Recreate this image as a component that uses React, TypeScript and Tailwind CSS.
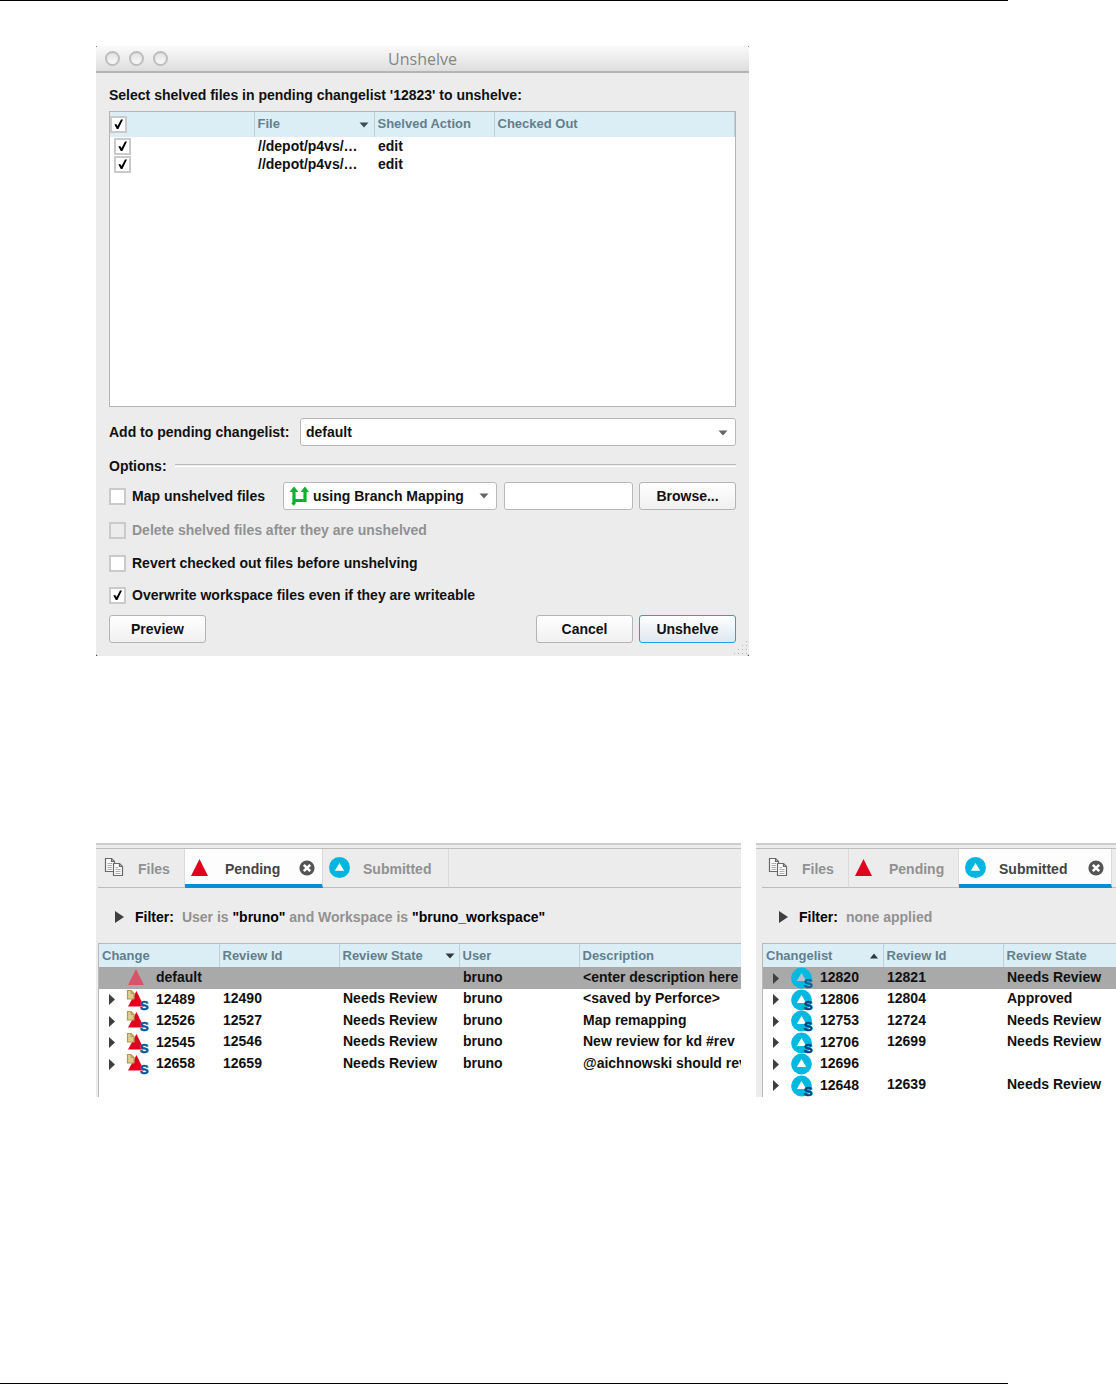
import React from "react";
import clsx from "clsx";

interface CheckProps {
  id?: string;
  label?: string;
  checked?: boolean;
  disabled?: boolean;
}

const CheckBox: React.FC<CheckProps> = ({ id, label, checked, disabled }) => (
  <span className="relative block h-[17px] w-[17px] shrink-0">
    <input
      id={id}
      type="checkbox"
      aria-label={label}
      defaultChecked={checked}
      disabled={disabled}
      className="peer block h-[17px] w-[17px] appearance-none border-2 border-[#cacaca] bg-white disabled:bg-[#ececec]"
    />
    <svg
      viewBox="0 0 17 17"
      className="pointer-events-none absolute inset-0 hidden h-[17px] w-[17px] peer-checked:block"
    >
      <path d="M4.4 8.6 L6.2 8 L7.6 10 L11 3.4 L13 3.4 L8.4 13 L6.8 13 Z" fill="#000" />
    </svg>
  </span>
);

const Arrow: React.FC<{ dir: "up" | "down"; className?: string }> = ({ dir, className }) => (
  <svg viewBox="0 0 10 6" className={clsx("h-[6px] w-[10px] shrink-0", className)}>
    <path d={dir === "down" ? "M0.5 0.5 H9.5 L5 5.5 Z" : "M1 5.5 H9 L5 0.5 Z"} fill="currentColor" />
  </svg>
);

const Expander: React.FC<{ className?: string }> = ({ className }) => (
  <svg viewBox="0 0 9 12" preserveAspectRatio="none" className={clsx("shrink-0", className)}>
    <path d="M0 0 L9 6 L0 12 Z" fill="#3f3f3f" />
  </svg>
);

const FilesIcon = () => (
  <svg viewBox="0 0 20 20" className="h-5 w-5 shrink-0">
    <g fill="#fafafa" stroke="#6a6a6a" strokeWidth="1.2">
      <path d="M1.5 1.5 H7.5 L10.5 4.5 V14.5 H1.5 Z" />
      <path d="M7.5 1.5 V4.5 H10.5" fill="none" />
      <path d="M3.5 6.5 H8 M3.5 8.5 H8 M3.5 10.5 H8 M3.5 12.5 H8" stroke="#b0b0b0" strokeWidth="1" />
      <path d="M9.5 6.5 H15.5 L18.5 9.5 V18.5 H9.5 Z" />
      <path d="M15.5 6.5 V9.5 H18.5" fill="none" />
      <path
        d="M11.5 10.5 H14 M11.5 12.5 H16.5 M11.5 14.5 H16.5 M11.5 16.5 H16.5"
        stroke="#b0b0b0"
        strokeWidth="1"
      />
    </g>
  </svg>
);

const PendingIcon = () => (
  <svg viewBox="0 0 17 17" className="h-[17px] w-[17px] shrink-0">
    <path d="M8.5 0 L17 17 H0 Z" fill="#e2001f" />
  </svg>
);

const SubmittedIcon = () => (
  <svg viewBox="0 0 21 21" className="h-[21px] w-[21px] shrink-0">
    <circle cx="10.5" cy="10.5" r="10.5" fill="#00b5de" />
    <path d="M10.5 6 L15.2 13.8 H5.8 Z" fill="#fff" />
  </svg>
);

const CloseIcon = () => (
  <svg viewBox="0 0 16 16" className="h-4 w-4">
    <circle cx="8" cy="8" r="7.6" fill="#555" />
    <path d="M4.8 4.8 L11.2 11.2 M11.2 4.8 L4.8 11.2" stroke="#fff" strokeWidth="2.6" />
  </svg>
);

const Badge: React.FC<{ fill: string }> = ({ fill }) => (
  <text x="14" y="21" fill={fill} stroke={fill} strokeWidth="0.6" fontSize="13" fontWeight="700">
    S
  </text>
);

const RowIcon: React.FC<{ kind: string }> = ({ kind }) => (
  <svg viewBox="0 0 24 22" className="h-[22px] w-6 shrink-0 overflow-visible">
    {kind === "default" && <path d="M10 2 L18 18 H2 Z" fill="#d85468" />}
    {kind === "pending" && (
      <>
        <path d="M10.5 2 L18 17.5 H2 Z" fill="#e2001f" />
        <path d="M1.5 1.5 H5 L8 4.5 V10 H1.5 Z" fill="#e0cd95" stroke="#b59a4c" strokeWidth="1.2" />
        <path d="M5 1.5 V4.5 H8" fill="none" stroke="#b59a4c" />
        <Badge fill="#0a5796" />
      </>
    )}
    {kind.startsWith("submitted") && (
      <>
        <circle cx="11.5" cy="11" r="10.4" fill="#00b9e1" />
        <path d="M11.5 6 L16.2 14 H6.8 Z" fill={kind === "submitted-selected" ? "#b9c4c8" : "#fff"} />
        {kind !== "submitted-plain" && (
          <Badge fill={kind === "submitted-selected" ? "#145f94" : "#06407f"} />
        )}
      </>
    )}
  </svg>
);

const BranchIcon = () => (
  <svg viewBox="0 0 20 20" className="h-5 w-5">
    <g fill="none" stroke="#0bb12c" strokeWidth="3.2">
      <path d="M5 4 V17 L3.5 18.5" />
      <path d="M5 14.5 H16 V4" />
    </g>
    <path d="M0.5 6 L5 0.5 L9.5 6 Z M11.5 6 L16 0.5 L20 6 Z" fill="#0bb12c" />
  </svg>
);

const button =
  "h-7 w-[97px] rounded-[3px] border border-[#b4b4b4] bg-linear-to-b from-white to-[#f0f0f0] font-bold";
const field = "h-7 rounded-[3px] border border-[#b8b8b8] bg-white font-bold";
const headCell = "border-r border-[#bfd0d8] p-0 text-left text-[13px] font-bold text-[#627f8c]";

const shelved = [
  { file: "//depot/p4vs/…", action: "edit" },
  { file: "//depot/p4vs/…", action: "edit" },
];

const UnshelveDialog = () => (
  <div className="w-[653px] bg-black">
    <section className="rounded-[2px] bg-[#ececec] pb-[13px]">
      <header className="relative flex h-[27px] items-center justify-center rounded-t-[2px] border-b-2 border-[#b4b4b4] bg-linear-to-b from-[#fafafa] to-[#dedede]">
        <div className="absolute left-[9px] flex gap-[9px]">
          {["Close", "Minimize", "Zoom"].map((name) => (
            <button
              key={name}
              aria-label={name}
              className="h-[15px] w-[15px] rounded-full border-2 border-[#bdbdbd] bg-linear-to-b from-[#e2e2e2] to-[#f8f8f8]"
            />
          ))}
        </div>
        <h1 className="font-['Open_Sans',sans-serif] text-base font-normal text-[#858585]">Unshelve</h1>
        </header>

      <div className="px-[13px]">
        <p className="mt-3 leading-5">Select shelved files in pending changelist '12823' to unshelve:</p>
        <div className="mt-[6px] h-[296px] border border-[#b5b5b5] bg-white">
          <table className="w-full table-fixed border-collapse">
            <colgroup>
              <col className="w-[144px]" />
              <col className="w-[120px]" />
              <col className="w-[120px]" />
              <col />
            </colgroup>
            <thead>
              <tr className="h-[25px] bg-[#dceef5]">
                <th className={headCell}>
                  <CheckBox label="Select all" checked />
                </th>
                <th className={headCell}>
                  <div className="flex items-center justify-between pr-[5px] pl-[3px]">
                    File <Arrow dir="down" className="text-[#404b50]" />
                  </div>
                </th>
                <th className={headCell}>
                  <div className="pl-[3px]">Shelved Action</div>
                </th>
                <th className={headCell}>
                  <div className="pl-[3px]">Checked Out</div>
                </th>
              </tr>
            </thead>
            <tbody>
              {shelved.map((row, i) => (
                <tr key={i} className="h-[18px] leading-[18px]">
                  <td className="p-0 pl-1">
                    <CheckBox label={"Select file " + (i + 1)} checked />
                  </td>
                  <td className="p-0 pl-1">{row.file}</td>
                  <td className="p-0 pl-1">{row.action}</td>
                  <td className="p-0" />
                </tr>
              ))}
            </tbody>
          </table>
        </div>

        <div className="mt-[11px] flex items-center">
          <label htmlFor="changelist" className="w-[191px]">
            Add to pending changelist:
          </label>
          <div className="relative flex-1">
            <select id="changelist" className={clsx(field, "block w-full appearance-none pl-[5px]")}>
              <option>default</option>
            </select>
            <Arrow dir="down" className="pointer-events-none absolute top-3 right-2 text-[#666]" />
          </div>
        </div>

        <div className="mt-[10px] flex h-5 items-center gap-2">
          <h2>Options:</h2>
          <div className="mb-[2px] h-[3px] flex-1 border-t border-b border-t-[#bcbcbc] border-b-white" />
        </div>

        <div className="mt-[6px] flex items-center">
          <CheckBox id="map" />
          <label htmlFor="map" className="ml-[6px] w-[151px]">
            Map unshelved files
          </label>
          <div className="relative w-[214px]">
            <select aria-label="Mapping" className={clsx(field, "block w-full appearance-none pl-[29px]")}>
              <option>using Branch Mapping</option>
            </select>
            <span className="pointer-events-none absolute top-1 left-[6px]">
              <BranchIcon />
            </span>
            <Arrow dir="down" className="pointer-events-none absolute top-[11px] right-2 text-[#666]" />
          </div>
          <input aria-label="Branch mapping name" className={clsx(field, "mr-[6px] ml-[7px] w-0 flex-1 px-1")} />
          <button className={button}>Browse...</button>
        </div>

        <div className="mt-[10px] flex items-center gap-[6px] text-[#919191]">
          <CheckBox id="delete" disabled />
          <label htmlFor="delete">Delete shelved files after they are unshelved</label>
        </div>
        <div className="mt-[13px] flex items-center gap-[6px]">
          <CheckBox id="revert" />
          <label htmlFor="revert">Revert checked out files before unshelving</label>
        </div>
        <div className="mt-3 flex items-center gap-[6px]">
          <CheckBox id="overwrite" checked />
          <label htmlFor="overwrite">Overwrite workspace files even if they are writeable</label>
        </div>

        <div className="relative mt-[10px] flex gap-[6px]">
          <button className={clsx(button, "mr-auto")}>Preview</button>
          <button className={button}>Cancel</button>
          <button className="h-7 w-[97px] rounded-[3px] border border-[#1ba4e6] bg-linear-to-b from-white to-[#dfe7ef] font-bold">
            Unshelve
          </button>
          {/* resize grip */}
          <svg viewBox="0 0 14 14" className="absolute -right-3 -bottom-3 h-[14px] w-[14px]">
            <path
              d="M12 0h1v1h-1z M8 4h1v1h-1z M12 4h1v1h-1z M4 8h1v1h-1z M8 8h1v1h-1z M12 8h1v1h-1z M0 12h1v1h-1z M4 12h1v1h-1z M8 12h1v1h-1z M12 12h1v1h-1z"
              fill="#b4b4b4"
            />
          </svg>
        </div>
      </div>
    </section>
  </div>
);

interface TabProps {
  icon: React.ReactNode;
  label: string;
  active?: boolean;
  className: string;
}

const Tab: React.FC<TabProps> = ({ icon, label, active, className }) => (
  <div
    className={clsx(
      "flex shrink-0 items-center border-r border-[#dadada] pl-[6px]",
      active
        ? "border-b-4 border-b-[#048fd4] bg-[#fdfdfd] pt-1 text-[#444]"
        : "border-b border-b-[#bdbdbd] pt-px text-[#919191]",
      className
    )}
  >
    <span className="flex w-[34px] items-center pb-[3px]">{icon}</span>
    <button className="font-bold">{label}</button>
    {active && (
      <button aria-label={"Close " + label} className="mr-[7px] ml-auto pb-[2px]">
        <CloseIcon />
      </button>
    )}
  </div>
);

interface Row {
  kind: string;
  cells: string[];
}

interface PanelProps {
  tabs: React.ReactNode;
  filter: React.ReactNode;
  columns: string[];
  sorted: number;
  dir: "up" | "down";
  rows: Row[];
  className: string;
  inset: string;
}

const Panel: React.FC<PanelProps> = ({ tabs, filter, columns, sorted, dir, rows, className, inset }) => (
  <section className={clsx("flex h-[254px] flex-col overflow-hidden bg-[#ececec]", className)}>
    <div className="h-[6px] shrink-0 border-t-2 border-b border-t-[#cdcdcd] border-b-[#bdbdbd]" />
    <div className={clsx("flex min-h-0 flex-1 flex-col", inset)}>
      <nav className="flex h-[39px] shrink-0">
        {tabs}
        <div className="flex-1 border-b border-[#bdbdbd]" />
      </nav>
      <div className="flex h-[55px] shrink-0 items-center pt-[2px] pl-[17px]">
        <Expander className="mr-[11px] h-3 w-[9px]" />
        <p className="whitespace-nowrap text-[#919191]">
          <b className="mr-2 text-black">Filter:</b>
          {filter}
        </p>
      </div>
      <div className="min-h-0 flex-1 border-t border-l border-[#b9b9b9] bg-white">
        <table className="w-full table-fixed border-collapse whitespace-nowrap">
          <colgroup>
            {columns.map((c, i) => (
              <col key={c} className={i < columns.length - 1 ? "w-[120px]" : ""} />
            ))}
          </colgroup>
          <thead>
            <tr className="h-[23px] bg-[#dceef5]">
              {columns.map((c, i) => (
                <th key={c} className={clsx(headCell, "last:border-r-0")}>
                  <div className="flex items-center justify-between pt-px pr-1 pl-[3px]">
                    {c}
                    {i === sorted && <Arrow dir={dir} className="text-[#303a3e]" />}
                  </div>
                </th>
              ))}
            </tr>
          </thead>
          <tbody>
            {rows.map((row, r) => (
              <tr key={r} className={clsx("odd:h-[22px] even:h-[21px]", r === 0 && "bg-[#a9a9a9]")}>
                {row.cells.map((cell, i) => (
                  <td key={i} className={clsx("p-0 pl-1", i > 0 && "overflow-hidden pb-[2px] leading-[19px]")}>
                    {i === 0 ? (
                      <div className="flex h-5 items-center pl-[6px]">
                        <Expander
                          className={clsx("mr-[11px] h-[11px] w-[6px]", row.kind === "default" && "invisible")}
                        />
                        <RowIcon kind={row.kind} />
                        <span className="pb-[2px] pl-[6px]">{cell}</span>
                      </div>
                    ) : (
                      cell
                    )}
                  </td>
                ))}
              </tr>
            ))}
          </tbody>
        </table>
      </div>
    </div>
  </section>
);

const pendingRows: Row[] = [
  { kind: "default", cells: ["default", "", "", "bruno", "<enter description here"] },
  { kind: "pending", cells: ["12489", "12490", "Needs Review", "bruno", "<saved by Perforce>"] },
  { kind: "pending", cells: ["12526", "12527", "Needs Review", "bruno", "Map remapping"] },
  { kind: "pending", cells: ["12545", "12546", "Needs Review", "bruno", "New review for kd #rev"] },
  { kind: "pending", cells: ["12658", "12659", "Needs Review", "bruno", "@aichnowski should rev"] },
];

const submittedRows: Row[] = [
  { kind: "submitted-selected", cells: ["12820", "12821", "Needs Review"] },
  { kind: "submitted", cells: ["12806", "12804", "Approved"] },
  { kind: "submitted", cells: ["12753", "12724", "Needs Review"] },
  { kind: "submitted", cells: ["12706", "12699", "Needs Review"] },
  { kind: "submitted-plain", cells: ["12696", "", ""] },
  { kind: "submitted", cells: ["12648", "12639", "Needs Review"] },
];

const App = () => (
  <main className="flex min-h-screen flex-col bg-white font-['Liberation_Sans',Arial,sans-serif] text-sm font-bold text-[#111]">
    <hr className="mr-[108px] border-t border-black" />
    <div className="mt-[45px] pl-24">
      <UnshelveDialog />
      <div className="mt-[187px] flex gap-[15px]">
        <Panel
          className="flex-[645]"
          inset="pl-[2px]"
          tabs={
            <>
              <Tab icon={<FilesIcon />} label="Files" className="w-[87px]" />
              <Tab icon={<PendingIcon />} label="Pending" active className="w-[138px]" />
              <Tab icon={<SubmittedIcon />} label="Submitted" className="w-[126px]" />
            </>
          }
          filter={
            <>
              User is <b className="text-black">"bruno"</b> and Workspace is{" "}
              <b className="text-black">"bruno_workspace"</b>
            </>
          }
          columns={["Change", "Review Id", "Review State", "User", "Description"]}
          sorted={2}
          dir="down"
          rows={pendingRows}
        />
        <Panel
          className="flex-[360]"
          inset="pl-[6px]"
          tabs={
            <>
              <Tab icon={<FilesIcon />} label="Files" className="w-[87px]" />
              <Tab icon={<PendingIcon />} label="Pending" className="w-[110px]" />
              <Tab icon={<SubmittedIcon />} label="Submitted" active className="w-[153px]" />
            </>
          }
          filter="none applied"
          columns={["Changelist", "Review Id", "Review State"]}
          sorted={0}
          dir="up"
          rows={submittedRows}
        />
      </div>
    </div>
    <hr className="mt-auto mr-[108px] border-t border-black" />
  </main>
);

export default App;
